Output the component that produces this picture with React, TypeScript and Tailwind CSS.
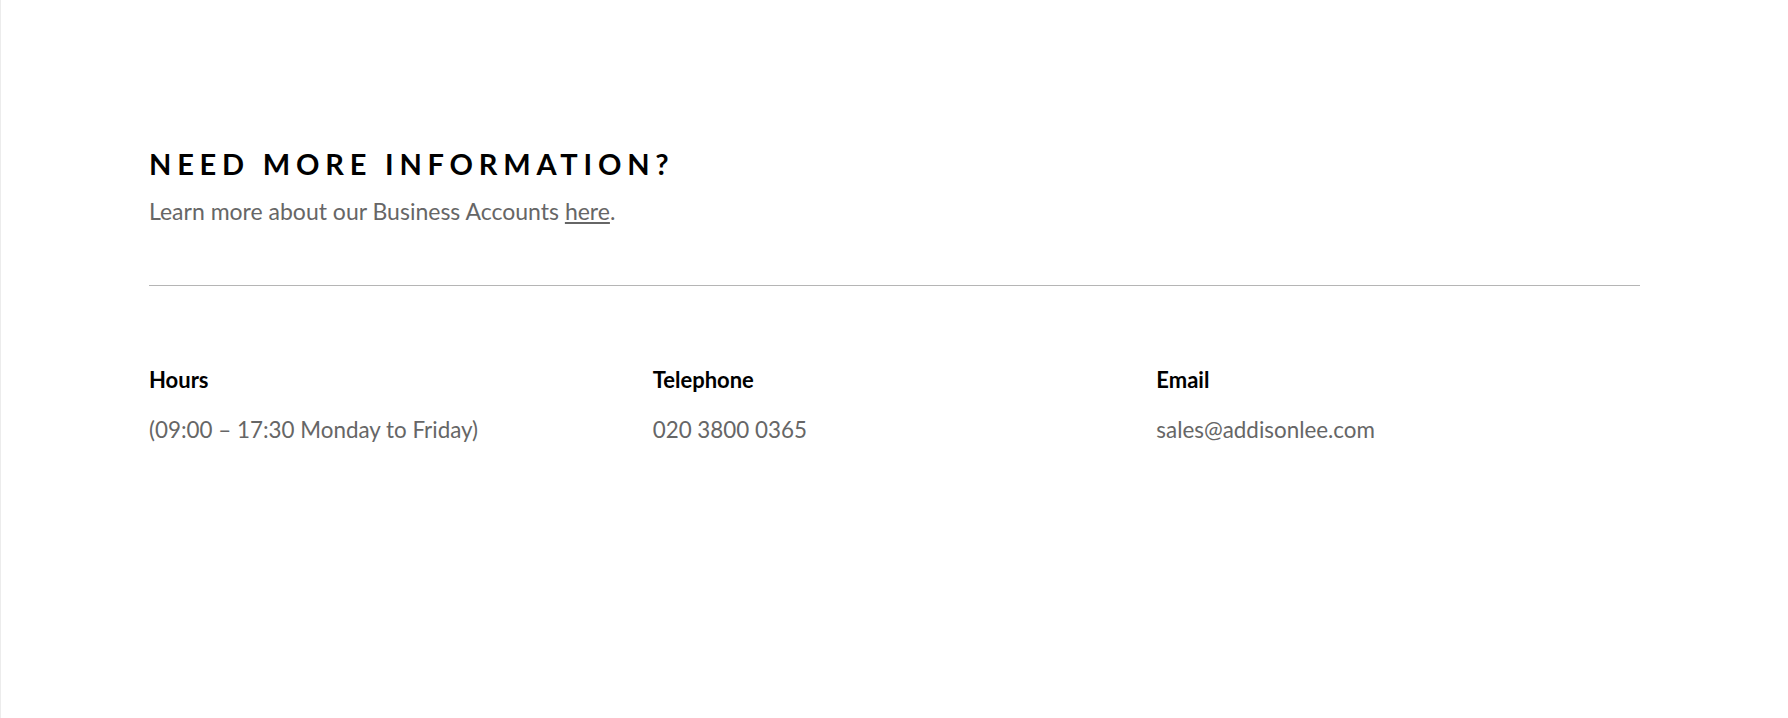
import React from "react";

const contacts = [
  { label: "Hours", value: "(09:00 – 17:30 Monday to Friday)" },
  { label: "Telephone", value: "020 3800 0365" },
  { label: "Email", value: "sales@addisonlee.com" },
];

export default function App() {
  return (
    <div
      className="min-h-[718px] w-full bg-white border-l border-[#ececec]"
      style={{ fontFamily: "Lato, 'Open Sans', sans-serif" }}
    >
      <section className="w-[1491px] ml-[148px] pt-[147px]">
        <h2 className="text-[29px] leading-[34px] font-bold tracking-[0.2em] text-black">
          NEED MORE INFORMATION?
        </h2>
        <p className="mt-[15px] text-[23px] leading-[30px] text-[#666]">
          Learn more about our Business Accounts{" "}
          <a href="#" className="underline underline-offset-2">
            here
          </a>
          .
        </p>

        <div className="mt-[59px] h-px bg-[#b5b5b5]" />

        <div className="grid grid-cols-3 gap-x-[20px] pt-[79px]">
          {contacts.map((c) => (
            <div key={c.label}>
              <h3 className="text-[22px] leading-[30px] font-bold text-black">{c.label}</h3>
              <p className="mt-[20px] text-[22.4px] leading-[30px] text-[#666]">{c.value}</p>
            </div>
          ))}
        </div>
      </section>
    </div>
  );
}
